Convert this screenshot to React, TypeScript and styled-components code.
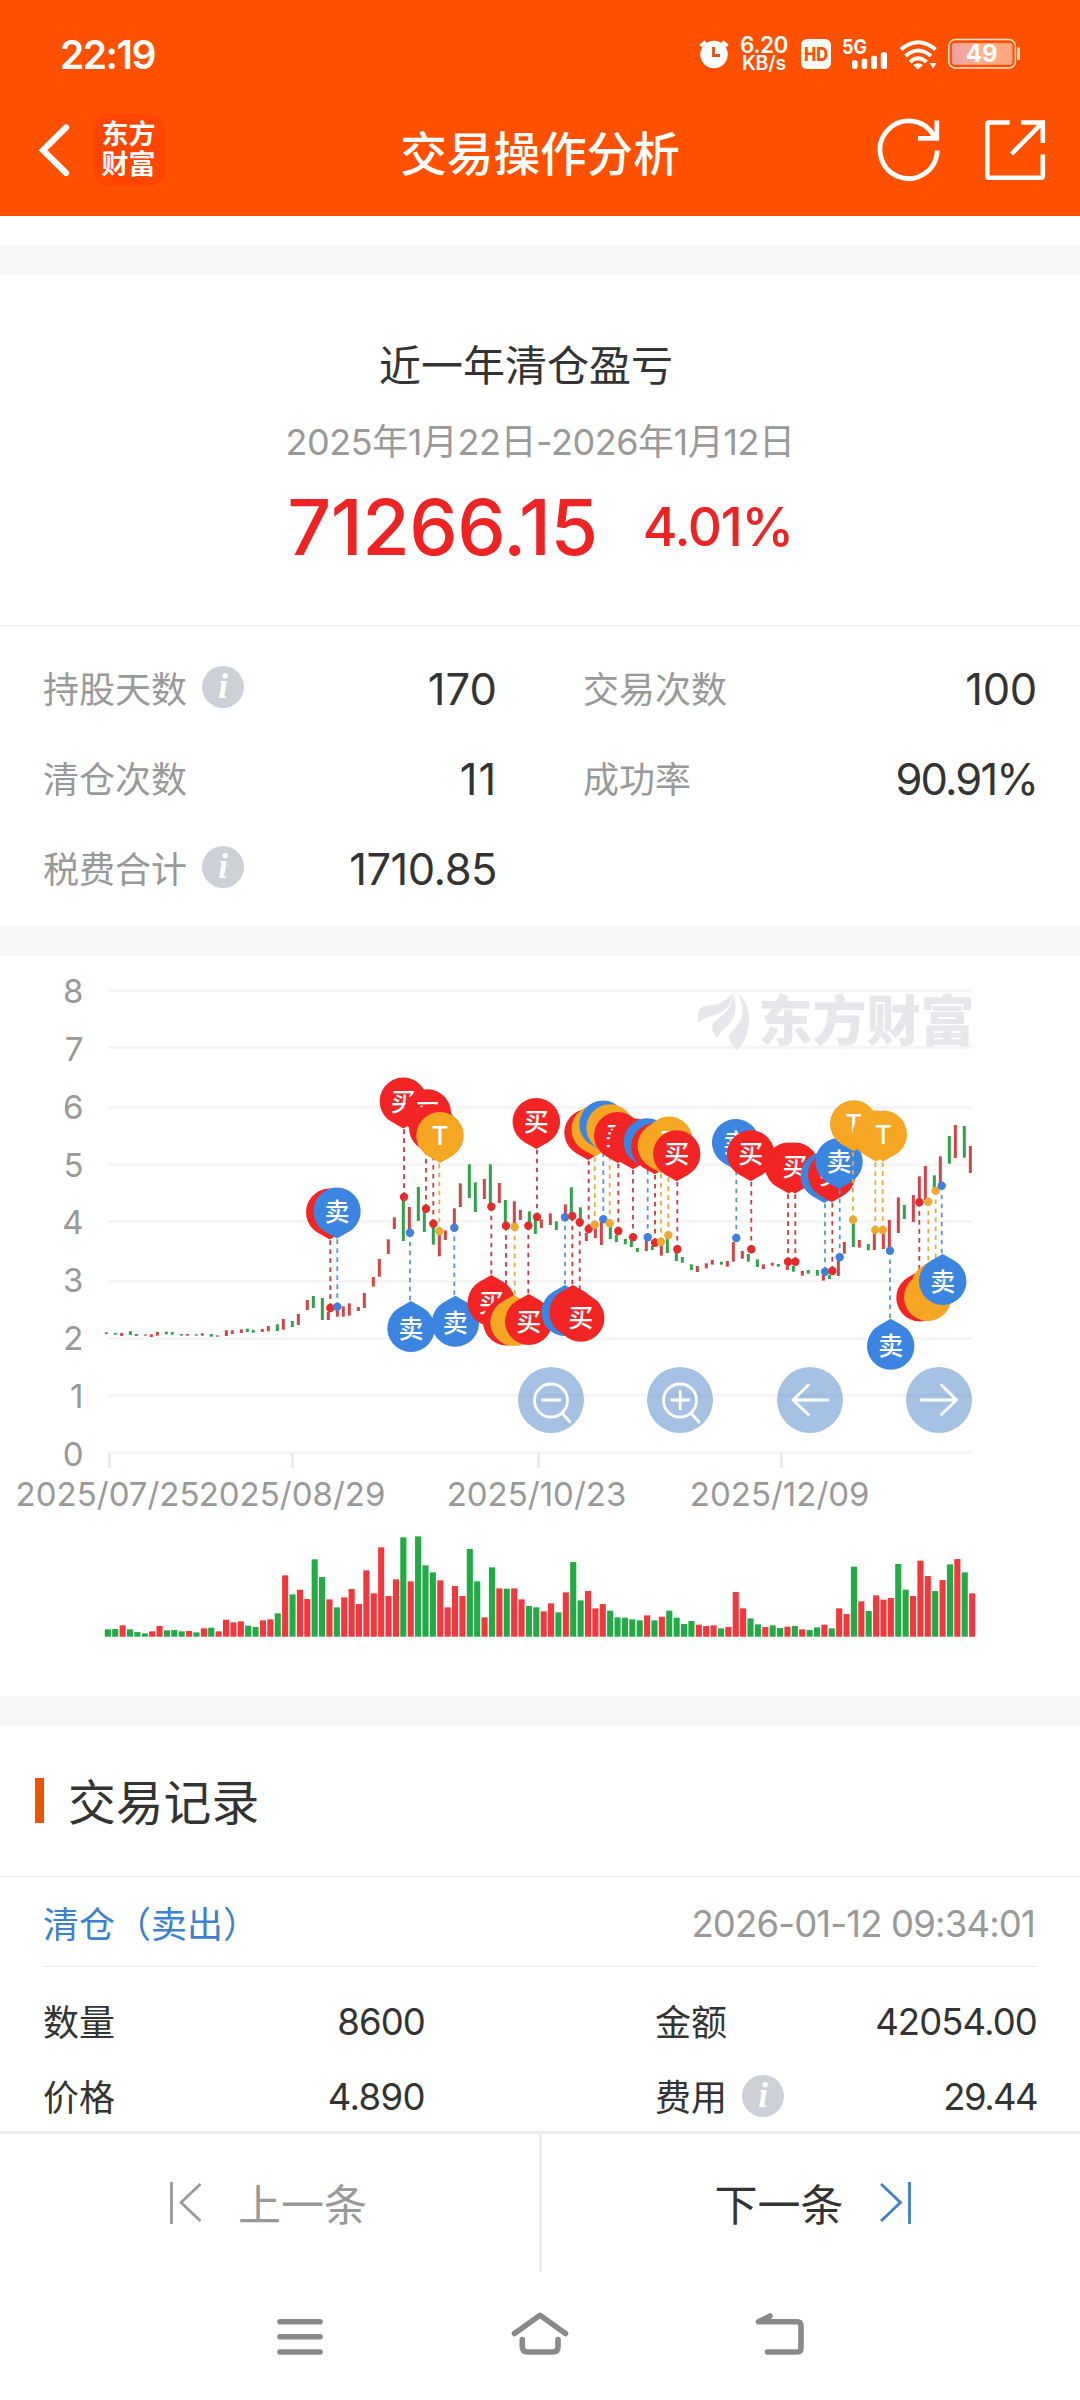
import React from 'react';
import styled, { createGlobalStyle } from 'styled-components';

const FONT = 'Inter, "Noto Sans CJK SC", sans-serif';
const BLUE = '#3b84e0';
const GOLD = '#f5a623';

const Global = createGlobalStyle`
  * { box-sizing: border-box; }
  body { margin: 0; background: #fff; font-family: ${FONT}; color: #333; }
  button { font: inherit; border: 0; padding: 0; background: none; color: inherit; }
  svg { display: block; }
`;

const Screen = styled.div`
  width: 1080px;
  height: 2400px;
  display: flex;
  flex-direction: column;
  background: #fff;
  overflow: hidden;
`;

const Header = styled.header`
  height: 216px;
  background: #ff5000;
  color: #fff;
  display: flex;
  flex-direction: column;
  flex: none;
`;

const StatusBar = styled.div`
  height: 88px;
  padding: 20px 59px 0 60px;
  display: flex;
  align-items: center;
  justify-content: space-between;
`;

const Clock = styled.span`
  font-size: 39px;
  font-weight: 600;
  letter-spacing: -1.5px;
`;

const StatusIcons = styled.div`
  display: flex;
  align-items: center;
`;

const NetSpeed = styled.div`
  display: flex;
  flex-direction: column;
  align-items: center;
  width: 50px;
  margin: 0 10px;
  font-weight: 600;
`;

const SpeedLine = styled.span<{ $size: number; $spacing: number }>`
  font-size: ${(p) => p.$size}px;
  line-height: 19px;
  letter-spacing: ${(p) => p.$spacing}px;
  white-space: nowrap;
`;

const NavBar = styled.div`
  height: 128px;
  display: grid;
  grid-template-columns: 390px 1fr 390px;
  align-items: center;
  padding-bottom: 4px;
`;

const NavLeft = styled.div`
  display: flex;
  align-items: center;
  gap: 23px;
  padding-left: 38px;
`;

const Brand = styled.div`
  width: 71px;
  height: 72px;
  border-radius: 15px;
  background: #ff4500;
  display: flex;
  flex-direction: column;
  align-items: center;
  justify-content: center;
  font-size: 27px;
  font-weight: 700;
  line-height: 30px;
`;

const Title = styled.h1`
  margin: 7px 0 0;
  font-size: 46.6px;
  font-weight: 500;
  line-height: 60px;
  text-align: center;
  white-space: nowrap;
`;

const NavRight = styled.div`
  display: flex;
  justify-content: flex-end;
  gap: 40px;
  padding-right: 32px;
`;

const Gap = styled.div<{ $h: number; $plain?: boolean }>`
  height: ${(p) => p.$h}px;
  flex: none;
  background: ${(p) => (p.$plain ? '#fff' : '#f7f7f7')};
`;

const Summary = styled.section`
  height: 351px;
  flex: none;
  padding-top: 61px;
  display: flex;
  flex-direction: column;
  align-items: center;
  border-bottom: 1px solid #ebebeb;
`;

const SummaryTitle = styled.h2`
  margin: 0;
  font-size: 42px;
  line-height: 60px;
  font-weight: 400;
  padding-right: 28px;
`;

const Period = styled.div`
  margin-top: 18px;
  font-size: 36px;
  line-height: 56px;
  color: #999;
  letter-spacing: -0.45px;
  white-space: nowrap;
`;

const Totals = styled.div`
  display: flex;
  align-items: center;
  gap: 45px;
  margin-top: 9px;
  height: 96px;
  color: #ee2424;
  font-weight: 500;
`;

const Profit = styled.span`
  font-size: 77px;
  letter-spacing: -0.45px;
`;

const Rate = styled.span`
  font-size: 53px;
  letter-spacing: -1.3px;
`;

const Stats = styled.section`
  height: 300px;
  flex: none;
  padding-top: 17px;
  display: grid;
  grid-template-columns: 540px 540px;
  grid-auto-rows: 90px;
`;

const Stat = styled.div`
  display: flex;
  align-items: center;
  padding: 0 43px;
`;

const Label = styled.span<{ $muted?: boolean }>`
  font-size: 36px;
  padding-bottom: 3px;
  color: ${(p) => (p.$muted ? '#999' : '#333')};
`;

const StatValue = styled.span<{ $track: number }>`
  margin-left: auto;
  padding-top: 1px;
  font-size: 43.5px;
  letter-spacing: ${(p) => p.$track}px;
`;

const InfoBadge = styled.span`
  width: 42px;
  height: 42px;
  margin: 0 0 2px 15px;
  border-radius: 50%;
  background: #cdd0d6;
  color: #fff;
  display: flex;
  align-items: center;
  justify-content: center;
  font: italic 700 35px/42px "Liberation Serif", serif;
`;

const ChartPanel = styled.section`
  position: relative;
  height: 740px;
  flex: none;
`;

const ChartTools = styled.div`
  position: absolute;
  left: 518px;
  top: 411px;
  width: 454px;
  display: flex;
  justify-content: space-between;
`;

const ToolButton = styled.button`
  width: 66px;
  height: 66px;
  border-radius: 50%;
  background: rgba(75, 132, 200, 0.5);
`;

const SectionHead = styled.div`
  height: 151px;
  flex: none;
  padding: 4px 0 0 35px;
  display: flex;
  align-items: center;
  gap: 24px;
  border-bottom: 1px solid #ebebeb;
`;

const Accent = styled.i`
  width: 9px;
  height: 45px;
  margin-bottom: 5px;
  background: #ea5504;
`;

const SectionTitle = styled.h2`
  margin: 0;
  font-size: 47.8px;
  line-height: 60px;
  font-weight: 400;
`;

const Record = styled.section`
  height: 254px;
  flex: none;
  padding: 0 43px;
`;

const RecordHead = styled.div`
  height: 90px;
  display: flex;
  align-items: center;
  justify-content: space-between;
  padding-top: 4px;
  border-bottom: 1px solid #ebebeb;
`;

const Side = styled.span`
  font-size: 36px;
  padding-bottom: 3px;
  color: #3d7fd0;
`;

const Time = styled.time`
  color: #999;
  font-size: 36.5px;
  letter-spacing: -0.85px;
  padding-right: 2px;
`;

const RecordGrid = styled.div`
  padding-top: 17px;
  display: grid;
  grid-template-columns: 382px 382px;
  grid-auto-rows: 75px;
  column-gap: 230px;
`;

const Cell = styled.div`
  display: flex;
  align-items: center;
`;

const CellValue = styled.span<{ $track: number }>`
  margin-left: auto;
  font-size: 36.5px;
  letter-spacing: ${(p) => p.$track}px;
`;

const Pager = styled.footer`
  height: 141px;
  flex: none;
  display: grid;
  grid-template-columns: 542px 1fr;
  border-top: 3px solid #ececec;
`;

const PageButton = styled.button<{ $muted?: boolean }>`
  display: flex;
  align-items: center;
  justify-content: center;
  gap: 36px;
  font-size: 43px;
  color: ${(p) => (p.$muted ? '#999' : '#333')};
  padding: ${(p) => (p.$muted ? '0 4px 0 2px' : '0 0 0 4px')};
  ${(p) => (p.$muted ? 'border-right: 3px solid #ececec;' : '')}

  span {
    padding-bottom: 2px;
  }
`;

const SystemNav = styled.nav`
  height: 128px;
  flex: none;
  display: grid;
  grid-template-columns: 240px 240px 240px;
  justify-content: center;
  align-items: center;
  justify-items: center;
`;

type Candle = [number, number, number, 'r' | 'g'];

/* Candle bodies in thirds of a pixel, one block per part of the plot. */
const candleBlocks: { ox: number; oy: number; bars: Candle[] }[] = [
  {
    ox: 90,
    oy: 1050,
    bars: [
      [49, 847, 852, 'r'], [76, 849, 854, 'g'], [95, 849, 858, 'r'], [121, 844, 855, 'g'], [139, 852, 858, 'g'],
      [166, 853, 857, 'r'], [184, 853, 861, 'r'], [202, 846, 857, 'r'], [229, 845, 853, 'g'], [247, 846, 854, 'g'],
      [274, 852, 857, 'g'], [292, 852, 857, 'r'], [319, 853, 857, 'g'], [337, 850, 857, 'r'], [364, 852, 860, 'g'],
      [382, 856, 860, 'r'], [409, 841, 858, 'r'], [427, 841, 852, 'r'], [454, 838, 849, 'r'], [472, 836, 846, 'g'],
      [490, 840, 848, 'g'], [517, 837, 846, 'r'], [535, 828, 844, 'r'], [562, 823, 843, 'g'], [580, 807, 839, 'r'],
      [607, 813, 831, 'g'], [625, 792, 825, 'r'], [652, 750, 780, 'r'], [670, 738, 774, 'g'], [697, 744, 810, 'g'],
      [715, 786, 810, 'r'], [742, 775, 800, 'r'], [760, 769, 800, 'r'], [778, 760, 797, 'r'], [805, 771, 783, 'r'],
      [823, 729, 774, 'r'], [850, 681, 710, 'r'], [868, 627, 680, 'r'], [895, 568, 612, 'r'], [913, 502, 537, 'r'],
      [940, 452, 573, 'g'], [958, 471, 540, 'r'], [985, 411, 513, 'g'], [1003, 485, 546, 'g'], [1030, 525, 584, 'g'],
      [1048, 553, 619, 'r'],
    ],
  },
  {
    ox: 430,
    oy: 1060,
    bars: [
      [46, 511, 540, 'r'], [73, 445, 495, 'r'], [91, 370, 441, 'r'], [118, 313, 414, 'g'], [136, 367, 456, 'g'],
      [163, 357, 417, 'r'], [181, 313, 432, 'g'], [208, 369, 429, 'r'], [226, 420, 490, 'g'], [253, 424, 492, 'r'],
      [271, 450, 480, 'r'], [298, 454, 490, 'g'], [316, 480, 522, 'g'], [334, 478, 504, 'r'], [361, 460, 495, 'r'],
      [379, 484, 510, 'g'], [406, 433, 465, 'r'], [424, 382, 465, 'g'], [451, 442, 480, 'g'], [469, 519, 543, 'r'],
      [496, 503, 534, 'r'], [514, 486, 555, 'r'], [541, 500, 537, 'g'], [559, 525, 546, 'g'], [586, 537, 553, 'g'],
      [604, 543, 561, 'g'], [622, 564, 576, 'g'], [649, 543, 573, 'r'], [667, 558, 570, 'g'], [694, 552, 587, 'r'],
      [712, 535, 579, 'g'], [739, 577, 603, 'g'], [757, 591, 608, 'g'], [784, 613, 630, 'g'], [802, 618, 636, 'r'],
      [829, 610, 625, 'r'], [847, 600, 614, 'r'], [874, 605, 614, 'g'], [892, 603, 620, 'r'],
    ],
  },
  {
    ox: 700,
    oy: 1060,
    bars: [
      [100, 546, 605, 'r'], [127, 573, 596, 'r'], [145, 582, 605, 'g'], [172, 598, 621, 'g'], [190, 613, 627, 'r'],
      [217, 608, 617, 'r'], [235, 612, 620, 'g'], [262, 618, 630, 'r'], [280, 618, 635, 'g'], [307, 633, 647, 'r'],
      [325, 630, 641, 'g'], [352, 630, 647, 'g'], [370, 645, 662, 'r'], [388, 645, 657, 'g'], [415, 603, 648, 'r'],
      [433, 546, 581, 'r'], [460, 490, 561, 'g'], [478, 540, 563, 'r'], [505, 552, 571, 'g'], [523, 520, 570, 'r'],
      [550, 520, 567, 'r'], [568, 480, 570, 'r'], [595, 412, 519, 'r'], [613, 435, 477, 'g'], [640, 405, 486, 'r'],
      [658, 349, 420, 'r'], [676, 318, 420, 'r'], [703, 346, 385, 'g'], [721, 289, 370, 'r'], [748, 228, 311, 'g'],
      [766, 195, 294, 'r'], [793, 198, 293, 'g'], [811, 258, 339, 'r'],
    ],
  },
];

/* Volume bars: height in thirds of a pixel followed by the direction. */
const volumes =
  '22g 23g 34r 22g 14g 10g 16r 32r 19g 20g 16g 17r 13g 25r 27g 16r 51r 43r 46r 33g 29g 49r 52r 70g 184r 127g 141r 113r 232g 179g 112r 88g 118r 143r 98r 199r 130r 268r 122r 172r 298g 166r 301g 214g 193g 169r 88r 152r 122r 263g 166g 58r 208g 145r 144g 145r 112r 92g 88g 76r 100r 73g 133r 224g 109g 137r 85r 98r 78g 58g 57g 52g 49g 64r 49g 60r 78g 57g 38g 47g 36r 32r 34r 25g 29r 134r 85r 55g 37g 29r 34g 26g 30r 32g 22r 20g 28g 36r 25g 85r 68r 210g 106r 77g 124r 111r 116r 218g 141g 122r 228r 182r 137g 170r 217g 233r 193g 130r'
    .split(' ')
    .map((v) => ({ h: parseInt(v, 10) / 3, up: v.endsWith('r') }));

type Kind = 'B' | 'S' | 'T';
type PinData = [Kind, number, number, number, number];

/* kind, pin x, pin y, trade point x, trade point y */
const pins: PinData[] = [
  ['B', 329.7, 1212.3, 330.3, 1308],
  ['S', 337, 1211.3, 337.3, 1306.7],
  ['B', 403.3, 1101.3, 404, 1197],
  ['S', 411, 1328.3, 410, 1232.7],
  ['B', 427.3, 1113, 426, 1208.7],
  ['B', 432.7, 1128, 433.3, 1223.7],
  ['T', 440, 1135.7, 439.3, 1231.3],
  ['S', 455.3, 1323, 454.3, 1227.7],
  ['B', 491.3, 1302.3, 491.3, 1206.7],
  ['B', 506.7, 1321.7, 506, 1225.7],
  ['T', 514, 1322.3, 514.7, 1227],
  ['B', 528.7, 1321.3, 528.3, 1225.7],
  ['B', 536.3, 1121.7, 537, 1217],
  ['S', 565, 1312.3, 565, 1217.3],
  ['B', 573, 1312.3, 572.3, 1216],
  ['B', 580.7, 1318, 579.7, 1222.3],
  ['B', 588, 1132.7, 588.7, 1229],
  ['T', 595, 1129.3, 594.7, 1224.7],
  ['S', 603, 1124.3, 603.3, 1219.3],
  ['T', 610, 1128, 609.7, 1223.3],
  ['B', 617.7, 1135.7, 618.3, 1231],
  ['B', 633, 1142, 633, 1237.3],
  ['S', 647.3, 1142, 647.7, 1237.3],
  ['B', 654.7, 1147, 655, 1242.7],
  ['T', 661.3, 1146, 661, 1241.7],
  ['T', 669, 1140.3, 668.3, 1235.3],
  ['B', 676.7, 1154, 677.3, 1249.3],
  ['S', 735.7, 1142.7, 736.3, 1238],
  ['B', 750.7, 1154, 751.3, 1249.3],
  ['B', 788.7, 1166.3, 788, 1261.7],
  ['B', 795, 1166.3, 795.3, 1261.7],
  ['S', 824.3, 1175.7, 825, 1271.7],
  ['B', 831.7, 1175, 832.3, 1271],
  ['S', 839, 1161.7, 839.7, 1257.3],
  ['T', 853.7, 1124, 853, 1219.7],
  ['T', 876, 1134.3, 875.3, 1230],
  ['T', 883.3, 1134.3, 882.7, 1230],
  ['S', 890.7, 1346, 890, 1250.7],
  ['B', 920, 1297.7, 919.3, 1202.3],
  ['T', 927.7, 1297.3, 928.3, 1201.7],
  ['T', 935, 1286, 935.7, 1190.7],
  ['S', 942.7, 1281.3, 941.7, 1185.7],
];

/* A pin's label is skipped when a later pin lies right on top of it. */
const isCovered = (index: number) =>
  pins.slice(index + 1).some((p) => Math.hypot(p[1] - pins[index][1], p[2] - pins[index][2]) < 15);

const pinStyle: Record<Kind, { fill: string; line: string; dot: string; text: string }> = {
  B: { fill: '#f22424', line: '#c93a3d', dot: '#e22c2c', text: '买' },
  S: { fill: BLUE, line: '#5b93d6', dot: '#3f80da', text: '卖' },
  T: { fill: GOLD, line: '#e8ac3c', dot: '#eda933', text: 'T' },
};

const gridY = [989, 1046, 1106, 1163, 1220, 1280, 1337, 1394, 1451];
const dates: [string, number, number][] = [
  ['2025/07/25', 107.6, 108],
  ['2025/08/29', 292, 291],
  ['2025/10/23', 536.5, 537],
  ['2025/12/09', 779.7, 780],
];

const Pin = ({ data: [kind, x, y, dx, dy], labelled }: { data: PinData; labelled: boolean }) => {
  const s = pinStyle[kind];
  const down = dy > y;
  return (
    <g>
      <line x1={dx} x2={dx} y1={down ? y + 28 : y - 28} y2={dy} stroke={s.line} strokeWidth="1.8" strokeDasharray="4.6 4.4" />
      <circle cx={dx} cy={dy} r="4.2" fill={s.dot} />
      <path
        transform={`translate(${x} ${y}) scale(1 ${down ? 1 : -1})`}
        d="M0 27.3 L-11.8 20.5 A23.7 23.7 0 1 1 11.8 20.5 Z"
        fill={s.fill}
      />
      {labelled && (
        <text x={x} y={y + 9.3} textAnchor="middle" fill="#fff" fontSize={kind === 'T' ? 26 : 25} fontWeight="500">
          {s.text}
        </text>
      )}
    </g>
  );
};

const Chart = () => (
  <svg width="1080" height="740" viewBox="0 956 1080 740" fontFamily={FONT}>
    {gridY.map((y, i) => (
      <g key={y}>
        <rect x="108" y={y} width="864" height="3" fill="#f5f5f5" />
        <text x="83.5" y={1003.2 + i * 57.8} textAnchor="end" fontSize="33" fill="#999">
          {8 - i}
        </text>
      </g>
    ))}
    <g fill="#e6e6eb">
      <path d="M698 1023 V1014 C699 1005 706 1006 714 1005 C722 1003 728 999 732 994 C733 1006 723 1012 714 1015 C707 1017 702 1019 698 1023 Z" />
      <path d="M733 993 C738 1009 735 1018 727 1026 C722 1031 719 1034 717 1038 C713 1033 711 1029 713 1024 C715 1018 733 1014 733 993 Z" />
      <path d="M738 994 C748 1001 752 1017 747 1033 C745 1041 741 1046 737 1050 C732 1046 729 1040 729 1036 C732 1029 751 1020 738 994 Z" />
      <text x="758.5" y="1040.5" fontSize="54" fontWeight="900">
        东方财富
      </text>
    </g>
    {dates.map(([d, cx, tick]) => (
      <g key={d}>
        <rect x={tick} y="1453" width="3" height="15" fill="#ececec" />
        <text x={cx} y="1505.5" textAnchor="middle" fontSize="33" fill="#999">
          {d}
        </text>
      </g>
    ))}
    {candleBlocks.map((b) => (
      <g key={b.ox}>
        {b.bars.map(([x, y1, y2, c]) => (
          <rect
            key={x}
            x={b.ox + x / 3 - 1.5}
            y={b.oy + y1 / 3}
            width="3"
            height={(y2 - y1) / 3}
            fill={c === 'r' ? '#cf4549' : '#2fa24b'}
          />
        ))}
      </g>
    ))}
    {pins.map((p, i) => (
      <Pin key={i} data={p} labelled={!isCovered(i)} />
    ))}
    {volumes.map((v, i) => (
      <rect
        key={i}
        x={104.8 + i * 7.387}
        y={1636.7 - v.h}
        width="6.1"
        height={v.h}
        fill={v.up ? '#f0383d' : '#22aa45'}
      />
    ))}
  </svg>
);

const toolPaths = [
  'M33 17 A16.5 16.5 0 1 0 33 50 A16.5 16.5 0 1 0 33 17 M24.5 33 H42 M44 46 L52 55',
  'M33 17 A16.5 16.5 0 1 0 33 50 A16.5 16.5 0 1 0 33 17 M24.5 33 H42 M33.2 24.5 V42 M44 46 L52 55',
  'M51 33 H16 M31.5 18 L16 33 L31.5 47.5',
  'M15 33 H50 M35.5 18 L50.5 33 L35.5 47.5',
];

const Info = () => <InfoBadge>i</InfoBadge>;

/* label, value, has info badge, letter spacing */
const stats: [string, string, boolean, number][] = [
  ['持股天数', '170', true, 0.1],
  ['交易次数', '100', false, -0.3],
  ['清仓次数', '11', false, 0.9],
  ['成功率', '90.91%', false, -1.9],
  ['税费合计', '1710.85', true, -0.5],
];

const cells: [string, string, boolean, number][] = [
  ['数量', '8600', false, -0.9],
  ['金额', '42054.00', false, -0.9],
  ['价格', '4.890', false, -0.6],
  ['费用', '29.44', true, -1.6],
];

const StatusGlyphs = () => (
  <svg width="222" height="36" viewBox="799 36 222 36" fontFamily={FONT}>
    <rect x="801" y="39" width="30" height="30" rx="6" fill="#fff" />
    <text x="816" y="60.5" fontSize="18.5" fontWeight="800" textAnchor="middle" fill="#ff5000" textLength="24" lengthAdjust="spacingAndGlyphs">
      HD
    </text>
    <text x="842" y="54" fontSize="20" fontWeight="700" fill="#fff" textLength="25" lengthAdjust="spacingAndGlyphs">
      5G
    </text>
    <g fill="#fff">
      <rect x="852" y="60.3" width="5.6" height="8.7" rx="2" />
      <rect x="861.6" y="58.7" width="5.6" height="10.3" rx="2" />
      <rect x="871" y="55.7" width="6" height="13.3" rx="2" />
      <rect x="880.8" y="52.3" width="6.2" height="16.7" rx="2" />
    </g>
    <g fill="none" stroke="#fff" strokeWidth="4">
      <path d="M901 49.5 Q918 35 935.5 49.5" />
      <path d="M905.5 56 Q918 45 931 56" />
      <path d="M910 62 Q918 54.5 926.5 62" />
    </g>
    <path d="M913 65 Q918 61.5 923 65 L918 69.5 Z M929.5 63 H936.5 L933 68.5 Z" fill="#fff" />
    <defs>
      <linearGradient id="battery">
        <stop offset="0" stopColor="#eda0a4" />
        <stop offset="0.45" stopColor="#ffb08c" />
        <stop offset="1" stopColor="#ffa57e" />
      </linearGradient>
    </defs>
    <rect x="948.8" y="39.6" width="66.6" height="28.4" rx="6.5" fill="none" stroke="#ffe3d2" strokeWidth="1.5" />
    <rect x="952" y="43" width="60.5" height="21.8" rx="2.5" fill="url(#battery)" />
    <rect x="1017" y="47.5" width="3" height="12.5" rx="1" fill="#ffe3d2" />
    <text x="981.7" y="62.4" fontSize="24" fontWeight="700" textAnchor="middle" fill="#fff">
      49
    </text>
  </svg>
);

export default function App() {
  return (
    <Screen>
      <Global />
      <Header>
        <StatusBar>
          <Clock>22:19</Clock>
          <StatusIcons>
            <svg width="30" height="32" viewBox="699 39 30 32" fill="none" stroke="#fff">
              <circle cx="714" cy="55.5" r="13.7" fill="#fff" stroke="none" />
              <path d="M700.5 47 L705.5 42.5 M727.5 47 L722.5 42.5" strokeWidth="3.6" />
              <path d="M713.5 48 V56.5 H720" stroke="#e8500f" strokeWidth="2.8" />
            </svg>
            <NetSpeed>
              <SpeedLine $size={22.5} $spacing={-0.4}>6.20</SpeedLine>
              <SpeedLine $size={19.5} $spacing={-0.2}>KB/s</SpeedLine>
            </NetSpeed>
            <StatusGlyphs />
          </StatusIcons>
        </StatusBar>
        <NavBar>
          <NavLeft>
            <svg width="32" height="54" viewBox="38 124 32 54" fill="none" stroke="#fff" strokeWidth="6.2" strokeLinecap="round">
              <path d="M66 128.5 L43 151.3 L66 174" />
            </svg>
            <Brand>
              <span>东方</span>
              <span>财富</span>
            </Brand>
          </NavLeft>
          <Title>交易操作分析</Title>
          <NavRight>
            <svg width="66" height="66" viewBox="876 117 66 66" fill="none" stroke="#fff" strokeWidth="4.8">
              <path d="M937.2 150.5 A28.6 28.8 0 1 1 934 136.5" />
              <path d="M936.8 120.5 V138.4 H918" />
            </svg>
            <svg width="66" height="66" viewBox="982 117 66 66" fill="none" stroke="#fff" strokeWidth="4.6">
              <path d="M1009.7 122.5 H989 Q987.3 122.5 987.3 124.5 V176 Q987.3 177.8 989 177.8 H1041 Q1042.8 177.8 1042.8 176 V154.5" />
              <path d="M1021 122.5 H1042.8 V143 M1042 123 L1011.5 154" />
            </svg>
          </NavRight>
        </NavBar>
      </Header>
      <Gap $h={29} $plain />
      <Gap $h={30} />
      <Summary>
        <SummaryTitle>近一年清仓盈亏</SummaryTitle>
        <Period>2025年1月22日-2026年1月12日</Period>
        <Totals>
          <Profit>71266.15</Profit>
          <Rate>4.01%</Rate>
        </Totals>
      </Summary>
      <Stats>
        {stats.map(([label, value, info, track]) => (
          <Stat key={label}>
            <Label $muted>{label}</Label>
            {info && <Info />}
            <StatValue $track={track}>{value}</StatValue>
          </Stat>
        ))}
      </Stats>
      <Gap $h={30} />
      <ChartPanel>
        <Chart />
        <ChartTools>
          {toolPaths.map((d) => (
            <ToolButton key={d}>
              <svg width="66" height="66" fill="none" stroke="#fff" strokeWidth="2.8" strokeLinecap="round">
                <path d={d} />
              </svg>
            </ToolButton>
          ))}
        </ChartTools>
      </ChartPanel>
      <Gap $h={30} />
      <SectionHead>
        <Accent />
        <SectionTitle>交易记录</SectionTitle>
      </SectionHead>
      <Record>
        <RecordHead>
          <Side>清仓（卖出）</Side>
          <Time>2026-01-12 09:34:01</Time>
        </RecordHead>
        <RecordGrid>
          {cells.map(([label, value, info, track]) => (
            <Cell key={label}>
              <Label>{label}</Label>
              {info && <Info />}
              <CellValue $track={track}>{value}</CellValue>
            </Cell>
          ))}
        </RecordGrid>
      </Record>
      <Pager>
        <PageButton $muted>
          <svg width="32" height="44" viewBox="171 2181 32 44" fill="none" stroke="#999" strokeWidth="2.8">
            <path d="M172.5 2182 V2224 M201.5 2184 L182 2202.5 L201.5 2221" />
          </svg>
          <span>上一条</span>
        </PageButton>
        <PageButton>
          <span>下一条</span>
          <svg width="32" height="44" viewBox="879 2181 32 44" fill="none" stroke="#4080c8" strokeWidth="2.8">
            <path d="M908.5 2182 V2224 M880 2184 L899.5 2202.5 L880 2221" />
          </svg>
        </PageButton>
      </Pager>
      <SystemNav>
        <svg width="60" height="50" viewBox="270 2311 60 50" stroke="#8a8a8a" strokeWidth="5.6" strokeLinecap="round">
          <path d="M280 2321.7 H320 M280 2336.8 H320 M280 2352 H320" />
        </svg>
        <svg width="60" height="50" viewBox="510 2311 60 50" fill="none" stroke="#8a8a8a" strokeWidth="5.6" strokeLinecap="round" strokeLinejoin="round">
          <path d="M514.5 2333.5 L540 2315.3 L565.5 2333.5 M522.3 2339.5 V2347 Q522.3 2352 528 2352 H553 Q558 2352 558 2347 V2339.5" />
        </svg>
        <svg width="60" height="50" viewBox="750 2311 60 50" fill="none" stroke="#8a8a8a" strokeWidth="5.6" strokeLinecap="round" strokeLinejoin="round">
          <path d="M770 2316 L758.5 2321.8 H797 Q801 2321.8 801 2326 V2348 Q801 2352 797 2352 H767.5" />
        </svg>
      </SystemNav>
    </Screen>
  );
}
